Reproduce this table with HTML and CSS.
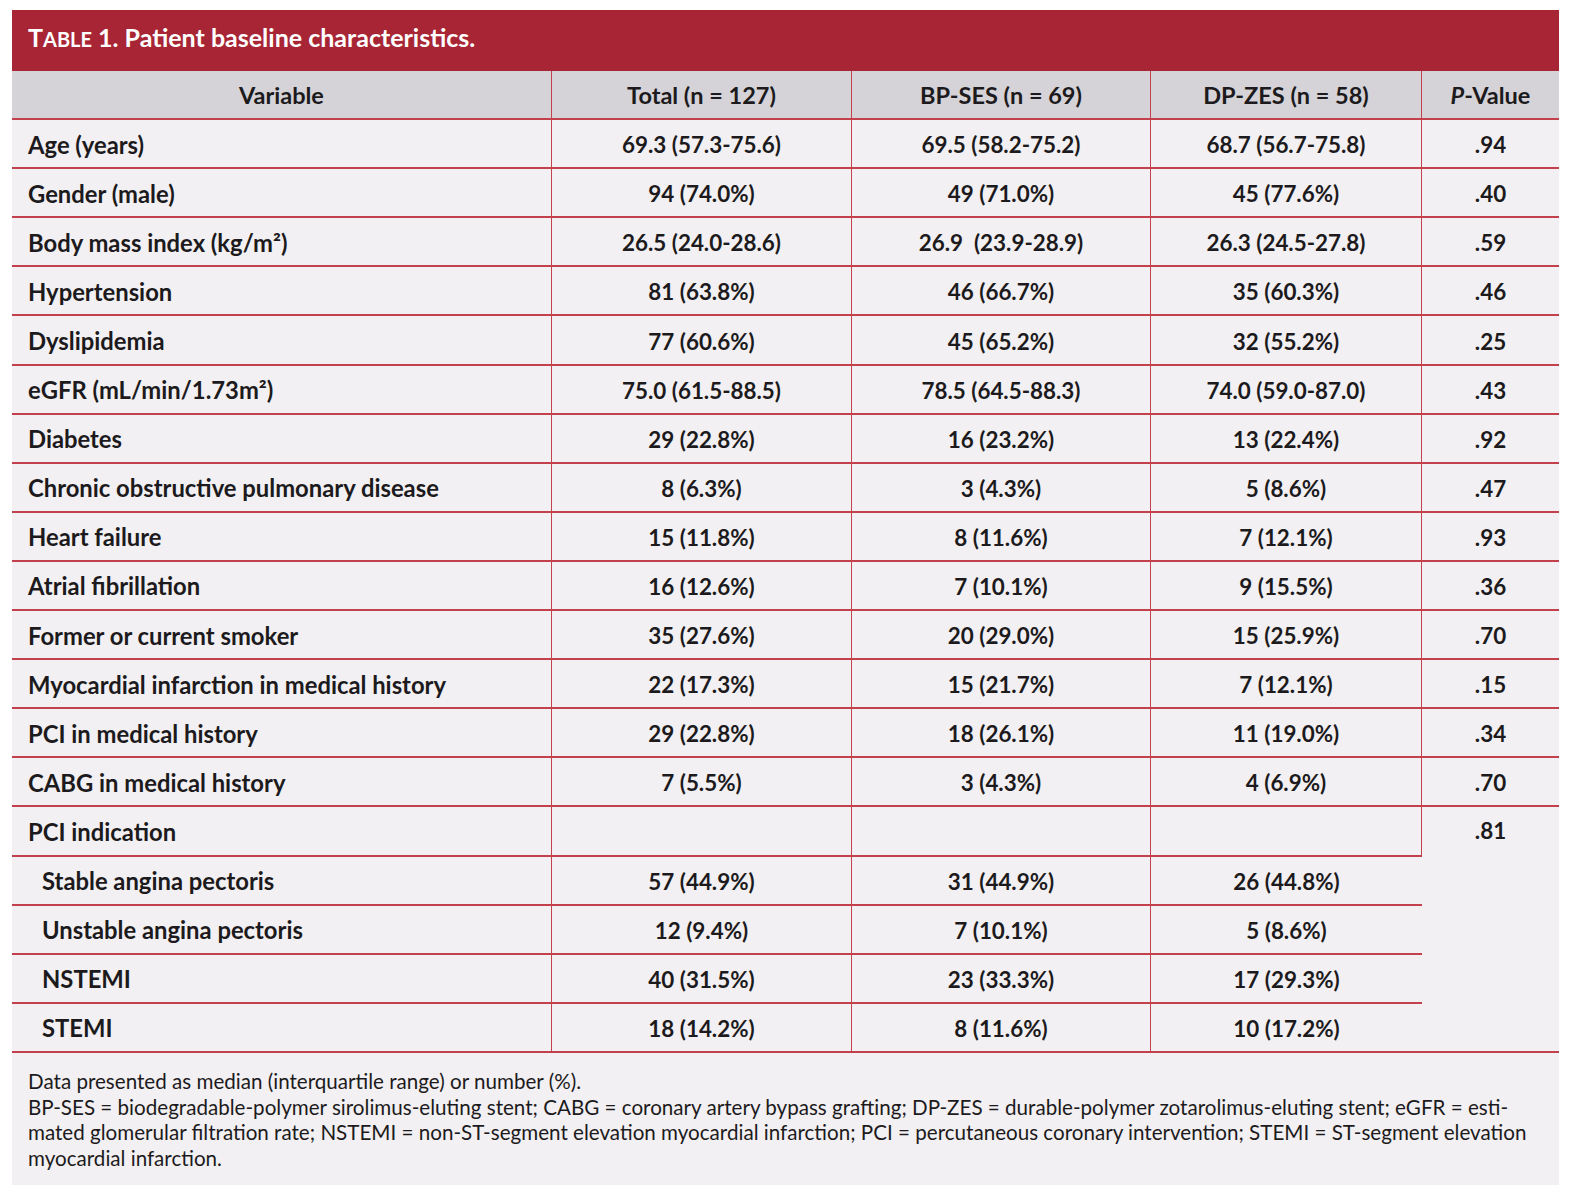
FILE: index.html
```html
<!DOCTYPE html>
<html lang="en">
<head>
<meta charset="utf-8">
<title>Table 1. Patient baseline characteristics</title>
<link rel="stylesheet" href="styles.css">
</head>
<body>
<div class="figure">
  <div class="caption">T<span class="sc">able</span> 1. Patient baseline characteristics.</div>
  <table class="data">
    <colgroup>
      <col class="c-var"><col class="c-total"><col class="c-bp"><col class="c-dp"><col class="c-p">
    </colgroup>
    <thead>
      <tr>
        <th>Variable</th>
        <th>Total (n = 127)</th>
        <th>BP-SES (n = 69)</th>
        <th>DP-ZES (n = 58)</th>
        <th><i>P</i>-Value</th>
      </tr>
    </thead>
    <tbody>
      <tr><td class="lbl">Age (years)</td><td>69.3 (57.3-75.6)</td><td>69.5 (58.2-75.2)</td><td>68.7 (56.7-75.8)</td><td>.94</td></tr>
      <tr><td class="lbl">Gender (male)</td><td>94 (74.0%)</td><td>49 (71.0%)</td><td>45 (77.6%)</td><td>.40</td></tr>
      <tr><td class="lbl">Body mass index (kg/m²)</td><td>26.5 (24.0-28.6)</td><td>26.9&nbsp; (23.9-28.9)</td><td>26.3 (24.5-27.8)</td><td>.59</td></tr>
      <tr><td class="lbl">Hypertension</td><td>81 (63.8%)</td><td>46 (66.7%)</td><td>35 (60.3%)</td><td>.46</td></tr>
      <tr><td class="lbl">Dyslipidemia</td><td>77 (60.6%)</td><td>45 (65.2%)</td><td>32 (55.2%)</td><td>.25</td></tr>
      <tr><td class="lbl">eGFR (mL/min/1.73m²)</td><td>75.0 (61.5-88.5)</td><td>78.5 (64.5-88.3)</td><td>74.0 (59.0-87.0)</td><td>.43</td></tr>
      <tr><td class="lbl">Diabetes</td><td>29 (22.8%)</td><td>16 (23.2%)</td><td>13 (22.4%)</td><td>.92</td></tr>
      <tr><td class="lbl">Chronic obstructive pulmonary disease</td><td>8 (6.3%)</td><td>3 (4.3%)</td><td>5 (8.6%)</td><td>.47</td></tr>
      <tr><td class="lbl">Heart failure</td><td>15 (11.8%)</td><td>8 (11.6%)</td><td>7 (12.1%)</td><td>.93</td></tr>
      <tr><td class="lbl">Atrial fibrillation</td><td>16 (12.6%)</td><td>7 (10.1%)</td><td>9 (15.5%)</td><td>.36</td></tr>
      <tr><td class="lbl">Former or current smoker</td><td>35 (27.6%)</td><td>20 (29.0%)</td><td>15 (25.9%)</td><td>.70</td></tr>
      <tr><td class="lbl">Myocardial infarction in medical history</td><td>22 (17.3%)</td><td>15 (21.7%)</td><td>7 (12.1%)</td><td>.15</td></tr>
      <tr><td class="lbl">PCI in medical history</td><td>29 (22.8%)</td><td>18 (26.1%)</td><td>11 (19.0%)</td><td>.34</td></tr>
      <tr><td class="lbl">CABG in medical history</td><td>7 (5.5%)</td><td>3 (4.3%)</td><td>4 (6.9%)</td><td>.70</td></tr>
      <tr><td class="lbl">PCI indication</td><td></td><td></td><td></td><td class="span-p" rowspan="5"><div class="p-top">.81</div></td></tr>
      <tr><td class="lbl sub">Stable angina pectoris</td><td>57 (44.9%)</td><td>31 (44.9%)</td><td>26 (44.8%)</td></tr>
      <tr><td class="lbl sub">Unstable angina pectoris</td><td>12 (9.4%)</td><td>7 (10.1%)</td><td>5 (8.6%)</td></tr>
      <tr><td class="lbl sub">NSTEMI</td><td>40 (31.5%)</td><td>23 (33.3%)</td><td>17 (29.3%)</td></tr>
      <tr><td class="lbl sub">STEMI</td><td>18 (14.2%)</td><td>8 (11.6%)</td><td>10 (17.2%)</td></tr>
    </tbody>
  </table>
  <div class="notes">
    Data presented as median (interquartile range) or number (%).<br>
    BP-SES = biodegradable-polymer sirolimus-eluting stent; CABG = coronary artery bypass grafting; DP-ZES = durable-polymer zotarolimus-eluting stent; eGFR = esti-<br>
    mated glomerular filtration rate; NSTEMI = non-ST-segment elevation myocardial infarction; PCI = percutaneous coronary intervention; STEMI = ST-segment elevation<br>
    myocardial infarction.
  </div>
</div>
</body>
</html>
```

FILE: styles.css
```css
html, body {
  margin: 0;
  padding: 0;
  background: #ffffff;
}

body {
  font-family: "Lato", "Liberation Sans", sans-serif;
  color: #1c1a1c;
}

.figure {
  margin: 10px 0 0 12px;
  width: 1547px;
  background: #f2f0f2;
}

.caption {
  background: #a72534;
  color: #ffffff;
  font-weight: 700;
  font-size: 25px;
  height: 61px;
  line-height: 55px;
  padding-left: 16px;
  box-sizing: border-box;
}

.sc {
  text-transform: uppercase;
  font-size: 0.8em;
}

.data {
  width: 100%;
  border-collapse: separate;
  border-spacing: 0;
  table-layout: fixed;
  font-size: 22.4px;
  font-weight: 700;
}

.c-var { width: 540px; }
.c-total { width: 300px; }
.c-bp { width: 299px; }
.c-dp { width: 271px; }
.c-p { width: 137px; }

.data tr {
  height: 49.1px;
}

.data th,
.data td {
  box-sizing: border-box;
  padding: 0;
  text-align: center;
  vertical-align: middle;
  border-bottom: 2px solid #c2414d;
  border-right: 1.5px solid #c2414d;
}

.data th:last-child,
.data td:last-child {
  border-right: none;
}

.data th {
  background: #d5d3d7;
  font-weight: 700;
  font-size: 23.5px;
  height: 49px;
}

.data td {
  background: #f2f0f2;
  padding-top: 2px;
}

.data td.lbl {
  text-align: left;
  padding-left: 16px;
  font-size: 23.8px;
}

.data td.sub {
  padding-left: 30px;
}

.data td.span-p {
  vertical-align: top;
  border-right: none;
}

.p-top {
  height: 44px;
  line-height: 44px;
}

.notes {
  font-size: 20.6px;
  line-height: 25.7px;
  font-weight: 400;
  padding: 16px 16px 13px 16px;
  color: #1c1a1c;
}
```
